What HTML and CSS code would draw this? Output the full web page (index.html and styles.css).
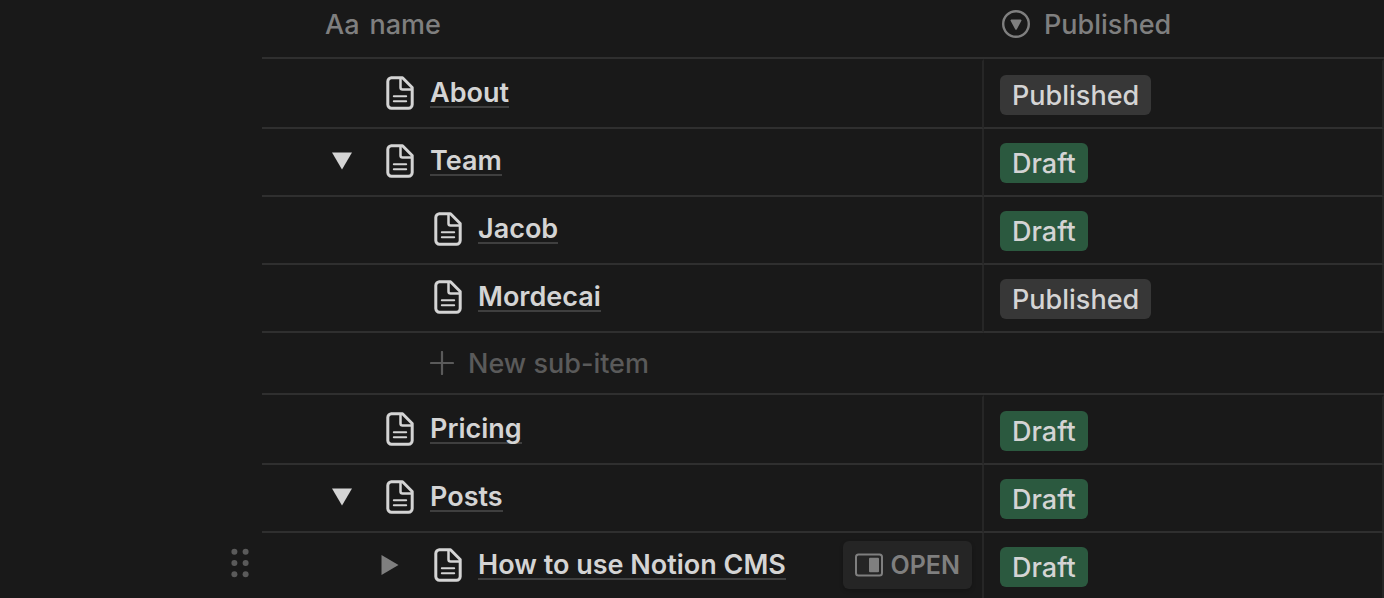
FILE: index.html
```html
<!DOCTYPE html>
<html lang="en">
<head>
    <meta charset="UTF-8">
    <meta name="viewport" content="width=device-width, initial-scale=1.0">
    <title>Pages</title>
    <link rel="stylesheet" href="styles.css">
</head>
<body>

    <!-- shared icons -->
    <svg class="symbols" aria-hidden="true">
        <symbol id="icon-page" viewBox="0 0 28 34">
            <path d="M5 1.8H16.5L26.2 11.5V28.5a3.7 3.7 0 0 1-3.7 3.7H5.5a3.7 3.7 0 0 1-3.7-3.7V5.5A3.7 3.7 0 0 1 5.5 1.8Z" fill="none" stroke="currentColor" stroke-width="3" stroke-linejoin="round"/>
            <path d="M14.5 2V11.5a2 2 0 0 0 2 2H26" fill="none" stroke="currentColor" stroke-width="2.5"/>
            <path d="M7.8 20.3H20.2M7.8 25.3H20.2" fill="none" stroke="currentColor" stroke-width="2" stroke-linecap="round"/>
        </symbol>
        <symbol id="icon-down" viewBox="0 0 20 18">
            <path d="M0 .5H20L10 17.5Z" fill="currentColor"/>
        </symbol>
        <symbol id="icon-right" viewBox="0 0 18 20">
            <path d="M.5 0V20L17.5 10Z" fill="currentColor"/>
        </symbol>
    </svg>

    <main class="page">
        <table class="database">
            <thead>
                <tr>
                    <th class="col-name" scope="col">
                        <div class="heading"><span class="type">Aa</span>name</div>
                    </th>
                    <th class="col-status" scope="col">
                        <div class="heading">
                            <svg class="select-icon" viewBox="0 0 28 28" aria-hidden="true">
                                <circle cx="14" cy="14" r="12.8" fill="none" stroke="currentColor" stroke-width="2.4"/>
                                <path d="M9.3 9.5H18.7a.8.8 0 0 1 .7 1.2L14.7 19.4a.8.8 0 0 1-1.4 0L8.6 10.7a.8.8 0 0 1 .7-1.2Z" fill="currentColor"/>
                            </svg>
                            Published
                        </div>
                    </th>
                </tr>
            </thead>

            <tbody>
                <tr>
                    <td><div class="item"><span class="toggle"></span><svg class="page-icon" aria-hidden="true"><use href="#icon-page"/></svg><a class="title" href="#about">About</a></div></td>
                    <td><span class="tag">Published</span></td>
                </tr>
                <tr>
                    <td><div class="item"><button class="toggle" aria-label="Collapse Team" aria-expanded="true"><svg class="down"><use href="#icon-down"/></svg></button><svg class="page-icon" aria-hidden="true"><use href="#icon-page"/></svg><a class="title" href="#team">Team</a></div></td>
                    <td><span class="tag green">Draft</span></td>
                </tr>
                <tr>
                    <td><div class="item nested"><span class="toggle"></span><svg class="page-icon" aria-hidden="true"><use href="#icon-page"/></svg><a class="title" href="#jacob">Jacob</a></div></td>
                    <td><span class="tag green">Draft</span></td>
                </tr>
                <tr>
                    <td><div class="item nested"><span class="toggle"></span><svg class="page-icon" aria-hidden="true"><use href="#icon-page"/></svg><a class="title" href="#mordecai">Mordecai</a></div></td>
                    <td><span class="tag">Published</span></td>
                </tr>
            </tbody>

            <tbody class="add">
                <tr>
                    <td colspan="2">
                        <button class="new-item">
                            <svg class="plus" viewBox="0 0 24 24" aria-hidden="true"><path d="M12 1V23M1 12H23" stroke="currentColor" stroke-width="2.2" stroke-linecap="round"/></svg>
                            New sub-item
                        </button>
                    </td>
                </tr>
            </tbody>

            <tbody>
                <tr>
                    <td><div class="item"><span class="toggle"></span><svg class="page-icon" aria-hidden="true"><use href="#icon-page"/></svg><a class="title" href="#pricing">Pricing</a></div></td>
                    <td><span class="tag green">Draft</span></td>
                </tr>
                <tr>
                    <td><div class="item"><button class="toggle" aria-label="Collapse Posts" aria-expanded="true"><svg class="down"><use href="#icon-down"/></svg></button><svg class="page-icon" aria-hidden="true"><use href="#icon-page"/></svg><a class="title" href="#posts">Posts</a></div></td>
                    <td><span class="tag green">Draft</span></td>
                </tr>
                <tr>
                    <td>
                        <button class="drag" aria-label="Drag row">
                            <svg viewBox="0 0 18 30" aria-hidden="true">
                                <g fill="currentColor">
                                    <circle cx="3.4" cy="3.8" r="3"/><circle cx="14.6" cy="3.8" r="3"/>
                                    <circle cx="3.4" cy="15" r="3"/><circle cx="14.6" cy="15" r="3"/>
                                    <circle cx="3.4" cy="26.2" r="3"/><circle cx="14.6" cy="26.2" r="3"/>
                                </g>
                            </svg>
                        </button>
                        <div class="item nested"><button class="toggle closed" aria-label="Expand How to use Notion CMS" aria-expanded="false"><svg class="right"><use href="#icon-right"/></svg></button><svg class="page-icon" aria-hidden="true"><use href="#icon-page"/></svg><a class="title" href="#how-to">How to use Notion CMS</a></div>
                        <button class="open">
                            <svg viewBox="0 0 28 24" aria-hidden="true">
                                <rect x="1" y="1.5" width="26" height="21" rx="2.5" fill="none" stroke="currentColor" stroke-width="2"/>
                                <rect x="14" y="4.7" width="10" height="14.6" rx="1" fill="currentColor"/>
                            </svg>
                            OPEN
                        </button>
                    </td>
                    <td><span class="tag green">Draft</span></td>
                </tr>
            </tbody>
        </table>
    </main>

</body>
</html>
```
FILE: styles.css
```css
* {
    box-sizing: border-box;
}
body {
    margin: 0;
    background: #191919;
    color: #d4d4d4;
    font-family: Inter, "Liberation Sans", sans-serif;
    font-size: 27px;
    font-weight: 500;
    overflow: hidden;
}
button {
    padding: 0;
    border: 0;
    background: none;
    color: inherit;
    font: inherit;
    cursor: pointer;
}
svg {
    display: block;
    flex: none;
}
.symbols {
    display: none;
}
.page {
    padding-left: 262px;
}

/* table */
.database {
    width: 100%;
    table-layout: fixed;
    border-collapse: separate;
    border-spacing: 0;
}
th {
    height: 59px;
    padding: 0;
    border-bottom: 2px solid #2f2f2f;
    color: #7f7f7f;
    font-weight: 500;
    text-align: left;
    vertical-align: top;
}
.col-name {
    width: 722px;
    padding-left: 63px;
}
.col-status {
    padding-left: 18px;
}
.heading {
    display: flex;
    align-items: center;
    height: 48px;
}
.type {
    margin-right: 10px;
}
.select-icon {
    width: 28px;
    height: 28px;
    margin-right: 14px;
}
td {
    position: relative;
    height: 68px;
    padding: 14px 16px 0;
    border-right: 2px solid #262626;
    border-bottom: 2px solid #2f2f2f;
    vertical-align: top;
}
/* the column line starts a little below the first row line */
tbody tr:first-child td {
    height: 70px;
    border-top: 2px solid #191919;
}
tbody.add tr:first-child td {
    height: 62px;
    padding: 10px 0 0 168px;
    border-top: 0;
    border-right: 0;
}

/* name cell */
.item {
    display: flex;
    align-items: center;
    height: 36px;
    padding-left: 44px;
}
.nested {
    padding-left: 92px;
}
.toggle {
    display: flex;
    align-items: center;
    justify-content: center;
    width: 40px;
    height: 36px;
    margin-right: 24px;
    flex: none;
}
.closed {
    color: #7f7f7f;
}
.down {
    width: 20px;
    height: 18px;
}
.right {
    width: 18px;
    height: 20px;
}
.page-icon {
    width: 28px;
    height: 34px;
    margin-right: 16px;
}
.title {
    padding-top: 2px;
    border-bottom: 2px solid #3f3f3f;
    color: inherit;
    font-weight: 600;
    line-height: 26px;
    text-decoration: none;
    white-space: nowrap;
}
.new-item {
    display: flex;
    align-items: center;
    height: 40px;
    color: #5a5a5a;
}
.plus {
    width: 24px;
    height: 24px;
    margin-right: 14px;
}

/* tags */
.tag {
    display: inline-block;
    padding: 2px 12px 0;
    border-radius: 6px;
    background: #373737;
    line-height: 38px;
    vertical-align: top;
}
.green {
    background: #2b593f;
}

/* controls over the hovered row */
.drag {
    position: absolute;
    top: 15px;
    left: -31px;
    color: #5a5a5a;
}
.drag svg {
    width: 18px;
    height: 30px;
}
.open {
    position: absolute;
    top: 8px;
    right: 10px;
    display: flex;
    align-items: center;
    gap: 8px;
    height: 48px;
    padding: 0 12px;
    border-radius: 6px;
    background: #252525;
    color: #7f7f7f;
    font-size: 25px;
    font-weight: 600;
    box-shadow: 0 2px 4px rgba(0, 0, 0, 0.2);
}
.open svg {
    width: 28px;
    height: 24px;
}
```
